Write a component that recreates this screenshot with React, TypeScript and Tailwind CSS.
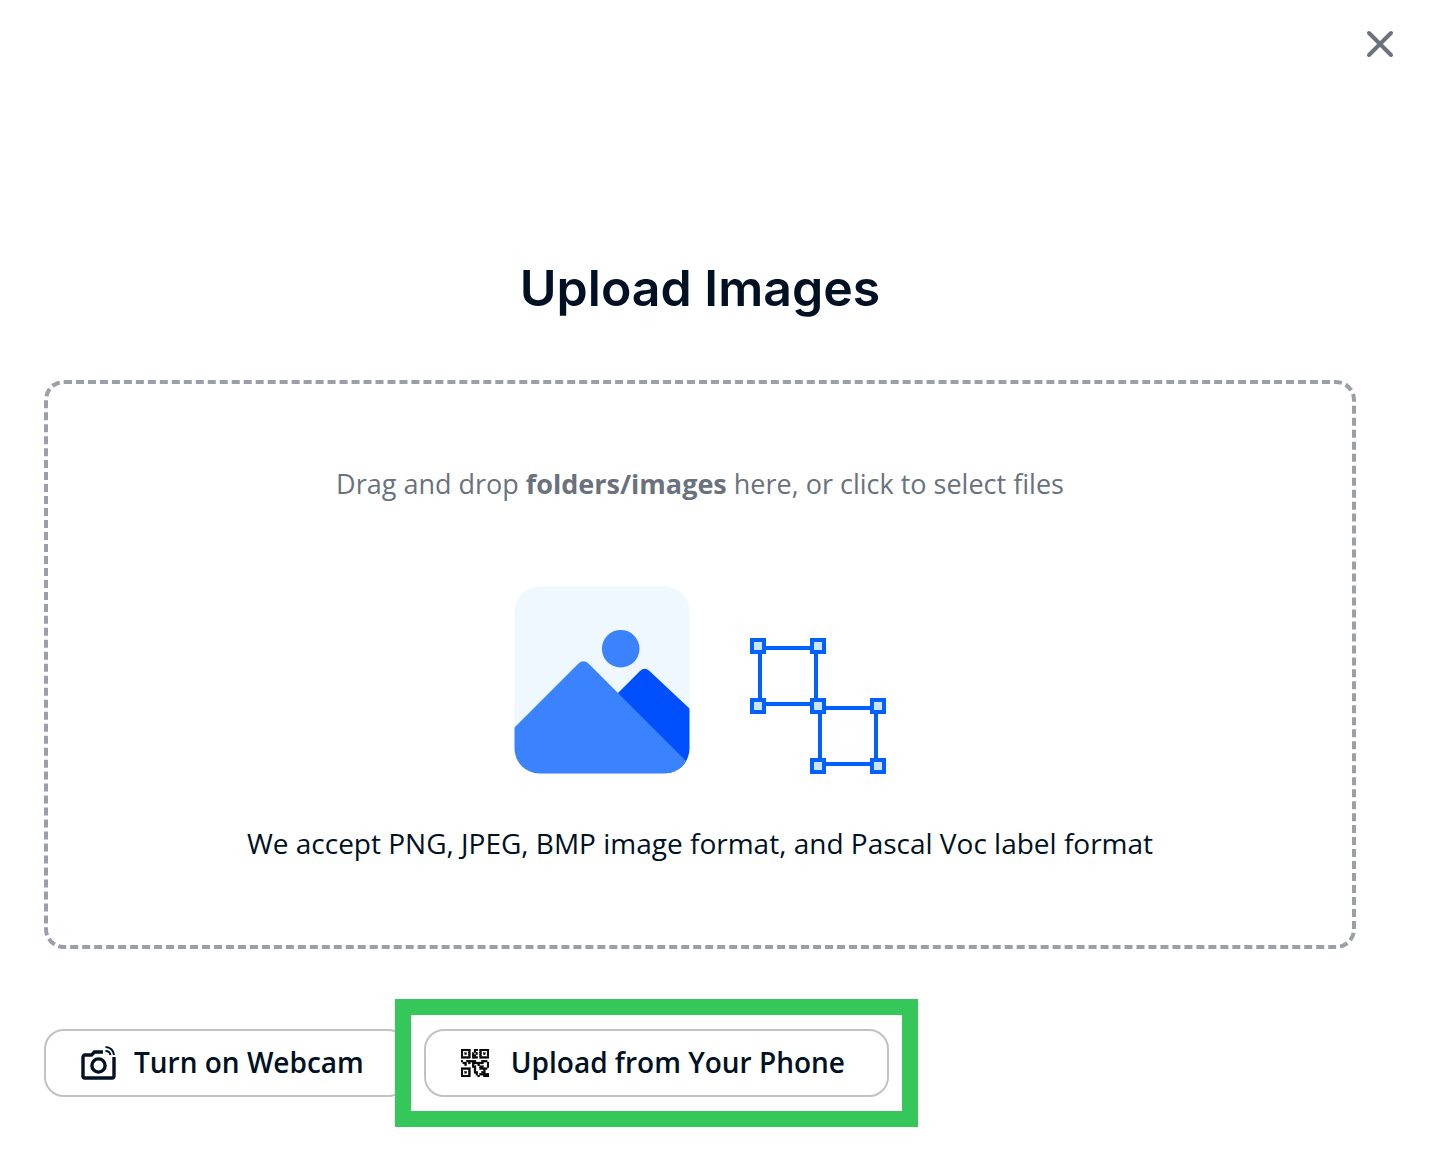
const QR_ROWS = [
  "XXXXX..XX.XXXXX",
  "X...X..X..X...X",
  "X.X.X.X.X.X.X.X",
  "X...X.XX..X...X",
  "XXXXX.XXX.XXXXX",
  "...............",
  "X..XXXXX...XXX.",
  ".XX.X.XXXXXX..X",
  "..X...X..X....X",
  "......XX..XX..X",
  "XXXXX..X..XXXX.",
  "X...X..X....X..",
  "X.X.X..XX..XX..",
  "X...X...X.XXXXX",
  "XXXXX....X..XXX",
];

function QrIcon() {
  return (
    <svg viewBox="0 0 15 15" className="size-7 text-black" fill="currentColor" stroke="currentColor" strokeWidth="0.2" aria-hidden="true">
      {QR_ROWS.flatMap((row, y) =>
        (Array.from(row.matchAll(/X+/g)) as RegExpMatchArray[]).map((run) => (
          <rect key={`${y}-${run.index}`} x={run.index} y={y} width={run[0].length} height="1" />
        )),
      )}
    </svg>
  );
}

function CameraIcon() {
  return (
    <svg viewBox="0 0 36 36" className="size-9" fill="none" stroke="currentColor" aria-hidden="true">
      <path d="M22 7h-8.500l-3 3H4a2 2 0 0 0-2 2v19a2 2 0 0 0 2 2h27a2 2 0 0 0 2-2V12" strokeWidth="3.400" />
      <circle cx="17.500" cy="20.500" r="6.600" strokeWidth="3.400" />
      <path d="M24.500 2a8.500 8.500 0 0 1 8.500 8" strokeWidth="2" />
      <path d="M24.500 6a5 5 0 0 1 5 4" strokeWidth="2" />
    </svg>
  );
}

function PictureIcon() {
  return (
    <svg viewBox="0 0 176 188" className="h-[188px] w-[176px]" aria-hidden="true">
      <defs>
        <clipPath id="picture-card">
          <rect x="0.500" y="0.500" width="175" height="187" rx="25" />
        </clipPath>
      </defs>
      <g clipPath="url(#picture-card)">
        <rect width="176" height="188" fill="#eff8ff" />
        <circle cx="106.700" cy="62.700" r="18.800" fill="#3b82ff" />
        <path d="M95 116 126 85q4.500-4.500 9.500 0L176 123v65h-20z" fill="#004fff" />
        <path d="M0 142 64.500 77.500q5-4.500 10 0L173 176 176 188H0z" fill="#3b82ff" />
      </g>
    </svg>
  );
}

const HANDLES = [
  [0, 0],
  [60, 0],
  [0, 60],
  [60, 60],
  [120, 60],
  [60, 120],
  [120, 120],
];

function BoxesIcon() {
  return (
    <svg viewBox="0 0 136 136" className="size-[136px]" stroke="#0061ff" strokeWidth="4" aria-hidden="true">
      <rect x="10" y="10" width="56" height="56" fill="none" />
      <rect x="70" y="70" width="56" height="56" fill="none" />
      {HANDLES.map(([x, y]) => (
        <rect key={`${x}-${y}`} x={x + 2} y={y + 2} width="12" height="12" fill="#cce5ff" />
      ))}
    </svg>
  );
}

const outlineButton =
  "flex h-[68px] items-center rounded-[20px] border-2 border-[#c2c2c2] bg-white pl-[35px] pr-[42px] text-[28px] leading-9 font-semibold whitespace-nowrap";

export default function App() {
  return (
    <main className="bg-white pb-[73px] font-['Open_Sans',sans-serif] text-[#001124]">
      <header className="flex justify-end px-[30px] pt-6">
        <button type="button" aria-label="Close" className="flex size-10 items-center justify-center text-[#69727d]">
          <svg viewBox="0 0 28 28" className="size-7" stroke="currentColor" strokeWidth="4" strokeLinecap="round" aria-hidden="true">
            <path d="M3 3 25 25M25 3 3 25" />
          </svg>
        </button>
      </header>

      <div className="pr-[74px] pl-11">
        <h1 className="mt-48 text-center font-['Inter',sans-serif] text-[50px] leading-16 font-semibold">Upload Images</h1>

        <section className="mt-[60px] flex flex-col items-center rounded-[20px] border-4 border-dashed border-[#9a9fa8] pt-20 pb-[82px] text-center text-[28px] leading-10">
          <p className="text-[27px] leading-10 text-[#69727d]">
            Drag and drop <strong className="font-bold">folders/images</strong> here, or click to select files
          </p>
          <div className="mt-[82px] flex items-end gap-[60px]">
            <PictureIcon />
            <BoxesIcon />
          </div>
          <p className="mt-[49px]">We accept PNG, JPEG, BMP image format, and Pascal Voc label format</p>
        </section>

        <div className="mt-20 flex gap-4">
          <button type="button" className={outlineButton}>
            <CameraIcon />
            <span className="ml-[17px] pb-0.5">Turn on Webcam</span>
          </button>
          <div className="relative">
            <button type="button" className={outlineButton}>
              <QrIcon />
              <span className="ml-[22px] pb-0.5">Upload from Your Phone</span>
            </button>
            <div className="pointer-events-none absolute -inset-x-[29px] -inset-y-[30px] border-16 border-[#35c759]" />
          </div>
        </div>
      </div>
    </main>
  );
}
